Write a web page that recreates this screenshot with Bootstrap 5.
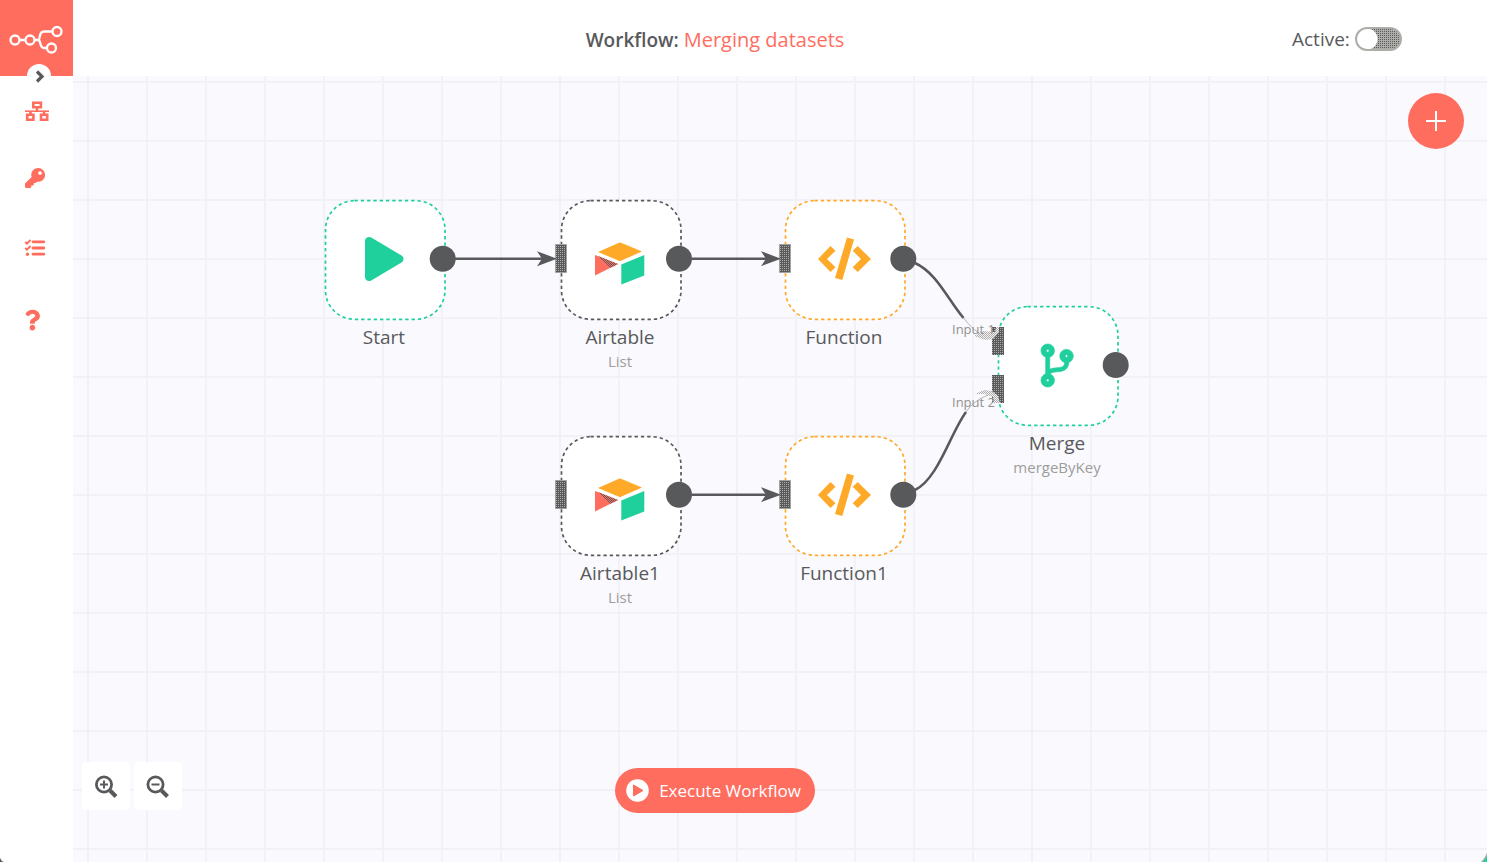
<!DOCTYPE html>
<html lang="en">
<head>
<meta charset="utf-8">
<meta name="viewport" content="width=device-width, initial-scale=1">
<title>Workflow: Merging datasets</title>
<link href="https://cdn.jsdelivr.net/npm/bootstrap@5.3.0/dist/css/bootstrap.min.css" rel="stylesheet">
<style>
  :root { --coral: #ff6d5f; --ink: #58595b; --mint: #1fcf9c; --amber: #ffa929; --ash: #aeada9; --grid: #f2f1f8; }
  body { font-family: "Open Sans", "Noto Sans", sans-serif; color: var(--ink); font-size: 19px; line-height: 24px; }
  svg { display: block; }
  .side-menu { width: 73px; background: #fff; }
  .brand { height: 76px; background: var(--coral); }
  .expand-btn { left: 27px; top: 64px; width: 24px; height: 24px; z-index: 5; padding: 0; border: 0; border-radius: 50%; background: #fff; color: var(--ink); }
  .menu-links { padding-top: 24px; gap: 46px; }
  .menu-links a { color: var(--coral); height: 24px; width: 24px; margin-left: 24px; display: block; }
  .menu-links svg { overflow: visible; }
  .top-bar { height: 76px; background: #fff; }
  .flow-title { padding-left: 65px; font-size: 19px; font-weight: 600; padding-top: 3px; }
  .flow-title a { color: var(--coral); font-size: 20px; font-weight: 400; }
  .active-box { width: 195px; gap: 5px; padding-top: 2px; }
  .active-switch { appearance: none; width: 47px; height: 24px; margin: 0; border: 2px solid var(--ash); border-radius: 12px;
    background: radial-gradient(circle at 10px 10px, #fff 10px, transparent 11px), conic-gradient(var(--ink) 25%, var(--ash) 0) 0 0 / 2px 2px; }
  .flow-canvas { background-color: #faf9fe; min-height: 640px;
    background-image: linear-gradient(90deg, var(--grid) 2px, transparent 2px), linear-gradient(var(--grid) 2px, transparent 2px);
    background-size: 59px 59px; background-position: 14px 0, 0 5px; }
  .flow-node { width: 122px; }
  .flow-node .title-line { margin: 4px -20px 0 -22px; text-align: center; }
  .flow-node .sub-line { margin: 0 -20px 0 -22px; text-align: center; font-size: 15px; color: #9d9d9b; }
  .n-start { left: 251px; top: 123px; color: var(--mint); }
  .n-table { left: 487px; top: 123px; color: var(--ink); }
  .n-func { left: 711px; top: 123px; color: var(--amber); }
  .n-table1 { left: 487px; top: 359px; color: var(--ink); }
  .n-func1 { left: 711px; top: 359px; color: var(--amber); }
  .n-merge { left: 924px; top: 229px; color: var(--mint); }
  .flow-node p { color: var(--ink); }
  .wires { pointer-events: none; }
  .wires text { font-size: 13px; fill: #92928f; }
  .add-btn { right: 23px; top: 17px; width: 56px; height: 56px; padding: 0; border: 0; border-radius: 50%; background: var(--coral); color: #fff; }
  .zoom-set { left: 9px; bottom: 52px; gap: 4px; }
  .zoom-set button { width: 48px; height: 48px; padding: 0; border: 0; border-radius: 4px; background: #fff; color: var(--ink); }
  .run-bar { bottom: 49px; padding-right: 130px; pointer-events: none; }
  .run-btn { height: 45px; padding: 0 14px 0 11px; gap: 10px; border: 0; border-radius: 23px; background: var(--coral); color: #fff; font-size: 17px; pointer-events: auto; }
  .corner-l { left: 0; bottom: 0; z-index: 6; }
  .corner-r { right: 0; bottom: 0; z-index: 6; }
</style>
</head>
<body>
<div class="d-flex min-vh-100 position-relative">
  <aside class="side-menu flex-shrink-0 position-relative">
    <a class="brand d-block" href="#" aria-label="Home">
      <svg width="73" height="76" viewBox="0 0 73 76" fill="none" stroke="#fff" stroke-width="2.300">
        <circle cx="15" cy="40" r="4.500"/><circle cx="30" cy="40" r="4.500"/><circle cx="57" cy="31.500" r="4.500"/><circle cx="51.500" cy="48" r="4.500"/>
        <path d="M20 40h5M35 40h3c3 0 0-8.500 6-8.500h8M38 40c3.500 0 1 8 6 8h3"/>
      </svg>
    </a>
    <button class="expand-btn position-absolute" type="button" aria-label="Expand menu">
      <svg width="24" height="24" viewBox="0 0 24 24" fill="none" stroke="currentColor" stroke-width="3.200"><path d="M10 7.500l5 5-5 5"/></svg>
    </button>
    <nav class="menu-links d-flex flex-column" aria-label="Main menu">
      <a href="#" aria-label="Workflows"><svg width="25" height="24" viewBox="0 0 25 24" fill="none" stroke="currentColor" stroke-width="2.600"><path d="M9.300 2.700h7.600v4.600H9.300zM3.200 14.700h6.200v5H3.200zM17 14.700h6.200v5H17zM13 7v4M6.500 11v4M20 11v4"/><path d="M1 11.200h24" stroke-width="1.600"/></svg></a>
      <a href="#" aria-label="Credentials"><svg width="24" height="24" viewBox="-26 51 614 614" fill="currentColor"><path d="M512 176.001C512 273.203 433.202 352 336 352c-11.220 0-22.190-1.062-32.827-3.069l-24.012 27.014A23.999 23.999 0 0 1 261.223 384H224v40c0 13.255-10.745 24-24 24h-40v40c0 13.255-10.745 24-24 24H24c-13.255 0-24-10.745-24-24v-78.059c0-6.365 2.529-12.470 7.029-16.971l161.802-161.802C163.108 213.814 160 195.271 160 176 160 78.798 238.797.001 335.999 0 433.488-.001 512 78.511 512 176.001zM336 128c0 26.510 21.490 48 48 48s48-21.490 48-48-21.490-48-48-48-48 21.490-48 48z"/></svg></a>
      <a href="#" aria-label="Executions"><svg width="24" height="24" viewBox="0 4 24 24" fill="none" stroke="currentColor"><path d="M9 5.800h10.800M9 12h10.800M9 18.200h10.800" stroke-width="2.800" stroke-linecap="round"/><path d="M1.200 6l1.800 1.600L6.500 4M1.200 12l1.800 1.600L6.500 10" stroke-width="2"/><circle cx="3.500" cy="18.200" r="1.700" fill="currentColor" stroke="none"/></svg></a>
      <a href="#" aria-label="Help"><svg width="17" height="24" viewBox="-14 9 418 590" fill="currentColor"><path d="M202.021 0C122.202 0 70.503 32.703 29.914 91.026c-7.363 10.580-5.093 25.086 5.178 32.874l43.138 32.709c10.373 7.865 25.132 6.026 33.253-4.148 25.049-31.381 43.630-49.449 82.757-49.449 30.764 0 68.816 19.799 68.816 49.631 0 22.552-18.617 34.134-48.993 51.164-35.423 19.860-82.299 44.576-82.299 106.405V320c0 13.255 10.745 24 24 24h72.471c13.255 0 24-10.745 24-24v-5.773c0-42.860 125.268-44.645 125.268-160.627C377.504 66.256 286.902 0 202.021 0zM192 373.459c-38.196 0-69.271 31.075-69.271 69.271 0 38.195 31.075 69.270 69.271 69.270s69.271-31.075 69.271-69.271-31.075-69.270-69.271-69.270z"/></svg></a>
    </nav>
  </aside>

  <main class="flex-grow-1 d-flex flex-column">
    <header class="top-bar d-flex align-items-center">
      <div class="flow-title flex-grow-1 text-center">Workflow: <a class="text-decoration-none" href="#">Merging datasets</a></div>
      <div class="active-box d-flex align-items-center">
        <label for="activeSwitch">Active:</label>
        <input class="active-switch" type="checkbox" role="switch" id="activeSwitch">
      </div>
    </header>

    <section class="flow-canvas flex-grow-1 position-relative overflow-hidden" aria-label="Workflow canvas">
      <svg width="0" height="0" class="position-absolute">
        <defs>
          <symbol id="frame" viewBox="0 0 122 122"><rect x="1.500" y="1.700" width="119.500" height="118.600" rx="29" fill="#fff" stroke="currentColor" stroke-width="1.700" stroke-dasharray="3.300 3"/></symbol>
          <symbol id="airtable" viewBox="0 0 122 122">
            <path fill="#ffa929" d="M38 53l21-9.300q1-.400 2 0L82 52.500l-21 9.200q-1 .400-2 0z"/>
            <path fill="#ff6d5f" d="M35 56l23 9-23 11.500z"/><path fill="url(#reddots)" d="M38 57l20 8-7.500 3.700z"/>
            <path fill="#1fcf9c" d="M61.300 65.500l23-9.500v20.500l-23 9z"/>
          </symbol>
          <symbol id="code" viewBox="0 0 122 122"><path fill="#ffa929" d="M34 60L46.500 47l5 4.700L43 60l8.500 8.300-5 4.700zM87 60L73.700 47l-5 4.700 8.300 8.300-8.300 8.300 5 4.700zM63 38.500l7 2-11.700 40.500-7.300-2z"/></symbol>
          <pattern id="dots" width="2" height="2" patternUnits="userSpaceOnUse"><path fill="#58595b" d="M0 0h2v2H0z"/><path fill="#aeada9" d="M0 0h1v1H0z"/></pattern>
          <pattern id="reddots" width="2" height="2" patternUnits="userSpaceOnUse"><path fill="#ff6d5f" d="M0 0h2v2H0z"/><path fill="#58595b" d="M0 0h1v1H0zM1 1h1v1H1z"/></pattern>
          <pattern id="haze" width="2" height="2" patternUnits="userSpaceOnUse"><path fill="#aeada9" d="M0 0h1v1H0zM1 1h1v1H1z"/><path fill="#f4f3f8" d="M1 0h1v1H1zM0 1h1v1H0z"/></pattern>
        </defs>
      </svg>

      <div class="flow-node n-start position-absolute">
        <svg width="122" height="122" viewBox="0 0 122 122"><use href="#frame"/><path fill="#1fcf9c" transform="translate(41 38) scale(.086)" d="M424.400 214.700L72.400 6.600C43.800-10.300 0 6.100 0 47.900V464c0 37.500 40.700 60.100 72.400 41.300l352-208c31.400-18.500 31.500-64.100 0-82.600z"/></svg>
        <p class="title-line mb-0">Start</p>
      </div>
      <div class="flow-node n-table position-absolute">
        <svg width="122" height="122" viewBox="0 0 122 122"><use href="#frame"/><use href="#airtable"/></svg>
        <p class="title-line mb-0">Airtable</p><p class="sub-line mb-0">List</p>
      </div>
      <div class="flow-node n-func position-absolute">
        <svg width="122" height="122" viewBox="0 0 122 122"><use href="#frame"/><use href="#code"/></svg>
        <p class="title-line mb-0">Function</p>
      </div>
      <div class="flow-node n-table1 position-absolute">
        <svg width="122" height="122" viewBox="0 0 122 122"><use href="#frame"/><use href="#airtable"/></svg>
        <p class="title-line mb-0">Airtable1</p><p class="sub-line mb-0">List</p>
      </div>
      <div class="flow-node n-func1 position-absolute">
        <svg width="122" height="122" viewBox="0 0 122 122"><use href="#frame"/><use href="#code"/></svg>
        <p class="title-line mb-0">Function1</p>
      </div>
      <div class="flow-node n-merge position-absolute">
        <svg width="122" height="122" viewBox="0 0 122 122"><use href="#frame"/><path fill="#1fcf9c" stroke="#1fcf9c" stroke-width="8" transform="translate(44 39) scale(.084)" d="M384 144c0-44.200-35.800-80-80-80s-80 35.800-80 80c0 36.400 24.300 67.100 57.500 76.800-.6 16.100-4.200 28.500-11 36.900-15.400 19.200-49.300 22.400-85.200 25.700-28.200 2.600-57.400 5.400-81.300 16.900v-144c32.500-10.200 56-40.500 56-76.300 0-44.200-35.800-80-80-80S0 35.800 0 80c0 35.800 23.500 66.100 56 76.300v199.300C23.500 365.900 0 396.200 0 432c0 44.200 35.800 80 80 80s80-35.800 80-80c0-34-21.200-63.100-51.200-74.600 3.100-5.200 7.800-9.800 14.900-13.400 16.200-8.200 40.400-10.400 66.100-12.800 42.200-3.900 90-8.400 118.200-43.400 14-17.400 21.100-39.800 21.600-67.900 31.600-10.800 54.400-40.700 54.400-75.900zM80 64c8.800 0 16 7.200 16 16s-7.200 16-16 16-16-7.200-16-16 7.200-16 16-16zm0 384c-8.800 0-16-7.200-16-16s7.200-16 16-16 16 7.200 16 16-7.200 16-16 16zm224-320c8.800 0 16 7.200 16 16s-7.200 16-16 16-16-7.200-16-16 7.200-16 16-16z"/></svg>
        <p class="title-line mb-0">Merge</p><p class="sub-line mb-0">mergeByKey</p>
      </div>

      <!-- Connections and ports, drawn above the nodes -->
      <svg class="wires position-absolute top-0 start-0 w-100 h-100">
        <g transform="translate(-73 -76)">
          <g fill="url(#dots)" stroke="#a3a29c">
            <path d="M555.500 244.500h11v28h-11zM779.500 244.500h11v28h-11zM555.500 480.500h11v28h-11zM779.500 480.500h11v28h-11z"/>
          </g>
          <path fill="url(#dots)" d="M992 327h12v28h-12zM992 375h12v28h-12z"/>
          <g fill="none" stroke="#58595b" stroke-width="2.500">
            <path d="M455 258.700h90M692 258.700h78M692 494.700h78"/>
            <path d="M915 263C937 273 948 300 963.500 318M915 490C938 479 950 434 966 412"/>
          </g>
          <g fill="none" stroke="#b5b4b4" stroke-width="1"><path d="M963.500 318Q974 332 988 338M966 412Q973 401 988 395"/></g>
          <path fill="url(#haze)" d="M974 336l9-5 12 1 1-5h3v5l-6 7-8 1zM975 394l9-4 8 1 6 5 2 7h-7v-6l-9-3z"/>
          <g fill="#58595b">
            <path id="tip" d="M557 258.700l-20 7.500 5-7.500-5-7.500z"/><use href="#tip" x="224"/><use href="#tip" x="224" y="236"/>
            <circle cx="442.700" cy="258.700" r="13"/><circle cx="679" cy="258.700" r="13"/><circle cx="903.300" cy="258.700" r="13"/>
            <circle cx="679" cy="494.700" r="13"/><circle cx="903.300" cy="494.700" r="13"/><circle cx="1115.700" cy="365" r="13"/>
          </g>
          <text x="952" y="334">Input 1</text><text x="952" y="407">Input 2</text>
        </g>
      </svg>

      <button class="add-btn position-absolute" type="button" aria-label="Add node">
        <svg width="56" height="56" viewBox="0 0 56 56" stroke="currentColor" stroke-width="2"><path d="M18 28h20M28 18v20"/></svg>
      </button>

      <div class="zoom-set position-absolute d-flex">
        <button type="button" aria-label="Zoom in"><svg width="48" height="48" viewBox="0 0 48 48" fill="none" stroke="currentColor"><circle cx="22" cy="22.500" r="7.600" stroke-width="2.800"/><path d="M28 28.500l6 6" stroke-width="4"/><path d="M18 22.500h8M22 18.500v8" stroke-width="2"/></svg></button>
        <button type="button" aria-label="Zoom out"><svg width="48" height="48" viewBox="0 0 48 48" fill="none" stroke="currentColor"><circle cx="21.500" cy="22.500" r="7.600" stroke-width="2.800"/><path d="M27.500 28.500l6 6" stroke-width="4"/><path d="M17.500 22.500h8" stroke-width="2"/></svg></button>
      </div>

      <div class="run-bar position-absolute start-0 end-0 d-flex justify-content-center">
        <button class="run-btn d-flex align-items-center" type="button">
          <svg width="23" height="23" viewBox="0 0 23 23"><circle cx="11.500" cy="11.500" r="11.300" fill="#fff"/><path d="M7.500 6v11l9.500-5.500z" fill="#ff6d5f" stroke="#ff6d5f" stroke-linejoin="round"/></svg>
          Execute Workflow
        </button>
      </div>
    </section>
  </main>
  <svg class="corner-l position-absolute" width="5" height="5"><path d="M0 1q1 3 4 4H0z" fill="#58595b"/></svg>
  <svg class="corner-r position-absolute" width="6" height="9"><path d="M6 0v9H0q4-4 6-9z" fill="#aeada9"/><path d="M6 3v6H2z" fill="#1fcf9c"/></svg>
</div>
<script src="https://cdn.jsdelivr.net/npm/bootstrap@5.3.0/dist/js/bootstrap.bundle.min.js"></script>
</body>
</html>
